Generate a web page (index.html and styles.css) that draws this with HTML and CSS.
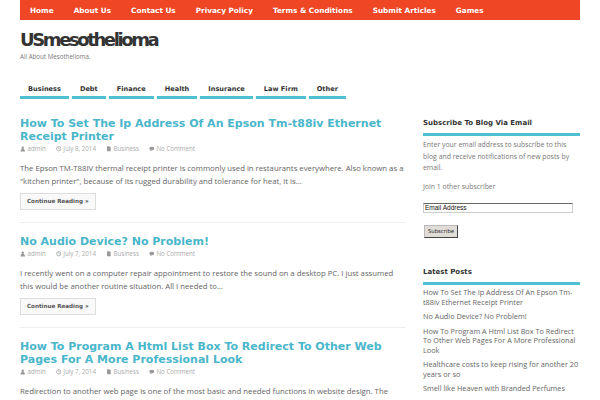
FILE: index.html
```html
<!DOCTYPE html>
<html>
<head>
<meta charset="utf-8">
<link rel="stylesheet" href="styles.css">
</head>
<body>
<div class="page">
  <div class="topbar">
    <ul class="menu">
      <li>Home</li><li>About Us</li><li>Contact Us</li><li>Privacy Policy</li><li>Terms &amp; Conditions</li><li>Submit Articles</li><li>Games</li>
    </ul>
  </div>
  <header class="brand">
    <h1 class="site-title">USmesothelioma</h1>
    <p class="tagline">All About Mesothelioma.</p>
  </header>
  <nav class="cats">
    <span class="cat">Business</span><span class="cat">Debt</span><span class="cat">Finance</span><span class="cat">Health</span><span class="cat">Insurance</span><span class="cat">Law Firm</span><span class="cat">Other</span>
  </nav>
  <div class="wrap">
    <main class="posts">
      <article class="post">
        <h2 class="post-title">How To Set The Ip Address Of An Epson Tm-t88iv Ethernet Receipt Printer</h2>
        <div class="meta">
          <span class="mi"><svg viewBox="0 0 8 8"><circle cx="4" cy="2.4" r="1.8"/><path d="M0.8 8 C0.8 5 2 4.5 4 4.5 C6 4.5 7.2 5 7.2 8 Z"/></svg>admin</span>
          <span class="mi"><svg viewBox="0 0 8 8"><circle class="ring" cx="4" cy="4" r="3.2"/><path class="hand" d="M4 2 V4.2 H5.8"/></svg>July 8, 2014</span>
          <span class="mi"><svg viewBox="0 0 8 8"><path d="M1.5 0.5 H5 L6.8 2.3 V7.5 H1.5 Z"/></svg>Business</span>
          <span class="mi"><svg viewBox="0 0 8 8"><path d="M4 1.2 C6.2 1.2 7.6 2.4 7.6 3.8 C7.6 5.2 6.2 6.3 4 6.3 L1.6 7.6 L2.2 5.8 C1 5.3 0.4 4.6 0.4 3.8 C0.4 2.4 1.8 1.2 4 1.2 Z"/></svg>No Comment</span>
        </div>
        <p class="excerpt">The Epson TM-T88IV thermal receipt printer is commonly used in restaurants everywhere. Also known as a "kitchen printer", because of its rugged durability and tolerance for heat, it is…</p>
        <span class="more">Continue Reading »</span>
      </article>
      <article class="post">
        <h2 class="post-title">No Audio Device? No Problem!</h2>
        <div class="meta">
          <span class="mi"><svg viewBox="0 0 8 8"><circle cx="4" cy="2.4" r="1.8"/><path d="M0.8 8 C0.8 5 2 4.5 4 4.5 C6 4.5 7.2 5 7.2 8 Z"/></svg>admin</span>
          <span class="mi"><svg viewBox="0 0 8 8"><circle class="ring" cx="4" cy="4" r="3.2"/><path class="hand" d="M4 2 V4.2 H5.8"/></svg>July 7, 2014</span>
          <span class="mi"><svg viewBox="0 0 8 8"><path d="M1.5 0.5 H5 L6.8 2.3 V7.5 H1.5 Z"/></svg>Business</span>
          <span class="mi"><svg viewBox="0 0 8 8"><path d="M4 1.2 C6.2 1.2 7.6 2.4 7.6 3.8 C7.6 5.2 6.2 6.3 4 6.3 L1.6 7.6 L2.2 5.8 C1 5.3 0.4 4.6 0.4 3.8 C0.4 2.4 1.8 1.2 4 1.2 Z"/></svg>No Comment</span>
        </div>
        <p class="excerpt">I recently went on a computer repair appointment to restore the sound on a desktop PC. I just assumed this would be another routine situation. All I needed to…</p>
        <span class="more">Continue Reading »</span>
      </article>
      <article class="post">
        <h2 class="post-title">How To Program A Html List Box To Redirect To Other Web Pages For A More Professional Look</h2>
        <div class="meta">
          <span class="mi"><svg viewBox="0 0 8 8"><circle cx="4" cy="2.4" r="1.8"/><path d="M0.8 8 C0.8 5 2 4.5 4 4.5 C6 4.5 7.2 5 7.2 8 Z"/></svg>admin</span>
          <span class="mi"><svg viewBox="0 0 8 8"><circle class="ring" cx="4" cy="4" r="3.2"/><path class="hand" d="M4 2 V4.2 H5.8"/></svg>July 7, 2014</span>
          <span class="mi"><svg viewBox="0 0 8 8"><path d="M1.5 0.5 H5 L6.8 2.3 V7.5 H1.5 Z"/></svg>Business</span>
          <span class="mi"><svg viewBox="0 0 8 8"><path d="M4 1.2 C6.2 1.2 7.6 2.4 7.6 3.8 C7.6 5.2 6.2 6.3 4 6.3 L1.6 7.6 L2.2 5.8 C1 5.3 0.4 4.6 0.4 3.8 C0.4 2.4 1.8 1.2 4 1.2 Z"/></svg>No Comment</span>
        </div>
        <p class="excerpt">Redirection to another web page is one of the most basic and needed functions in website design. The purpose is to send visitors to another page, usually something like this one…</p>
        <span class="more">Continue Reading »</span>
      </article>
    </main>
    <aside class="sidebar">
      <section class="widget">
        <h3 class="widget-title">Subscribe To Blog Via Email</h3>
        <p class="wtext">Enter your email address to subscribe to this blog and receive notifications of new posts by email.</p>
        <p class="wtext join">Join 1 other subscriber</p>
        <div class="email">Email Address</div>
        <span class="subbtn">Subscribe</span>
      </section>
      <section class="widget latest">
        <h3 class="widget-title">Latest Posts</h3>
        <ul class="plist">
          <li>How To Set The Ip Address Of An Epson Tm-t88iv Ethernet Receipt Printer</li>
          <li>No Audio Device? No Problem!</li>
          <li>How To Program A Html List Box To Redirect To Other Web Pages For A More Professional Look</li>
          <li>Healthcare costs to keep rising for another 20 years or so</li>
          <li>Smell like Heaven with Branded Perfumes</li>
        </ul>
      </section>
    </aside>
  </div>
</div>
</body>
</html>
```

FILE: styles.css
```css
html, body {
  margin: 0;
  padding: 0;
  background: #fff;
}
body {
  font-family: "Open Sans", "DejaVu Sans", sans-serif;
  color: #666;
  overflow: hidden;
  height: 400px;
}
.page {
  width: 560px;
  margin: 0 auto;
}
.topbar {
  position: relative;
  height: 20px;
  background: #ef4626;
}
.topbar::before,
.topbar::after {
  content: "";
  position: absolute;
  bottom: 4px;
  width: 40%;
  height: 6px;
  box-shadow: 0 4px 4px rgba(0, 0, 0, 0.6);
  z-index: -1;
}
.topbar::before {
  left: 6px;
  transform: rotate(-1.2deg);
}
.topbar::after {
  right: 6px;
  transform: rotate(1.2deg);
}
.menu {
  list-style: none;
  margin: 0;
  padding: 0 0 0 10px;
  display: flex;
  gap: 20px;
  height: 20px;
  align-items: center;
}
.menu li {
  font-family: "DejaVu Sans", sans-serif;
  font-weight: bold;
  font-size: 7.3px;
  color: #fff;
}
.brand {
  padding-top: 9px;
}
.site-title {
  margin: 0;
  font-family: "DejaVu Sans", sans-serif;
  font-weight: bold;
  font-size: 18px;
  letter-spacing: -2.4px;
  line-height: 22px;
  color: #333;
}
.tagline {
  margin: 2px 0 0;
  font-size: 6.2px;
  line-height: 8px;
  color: #777;
}
.cats {
  display: flex;
  gap: 3px;
  margin-top: 21px;
}
.cat {
  font-family: "DejaVu Sans", sans-serif;
  font-weight: bold;
  font-size: 6.6px;
  color: #333;
  padding: 0 8px;
  line-height: 14px;
  border-bottom: 3px solid #4ec0cf;
}
.wrap {
  display: flex;
  gap: 17px;
  margin-top: 18px;
}
.posts {
  width: 386px;
  flex: none;
}
.post {
  padding: 0 0 12px;
  border-bottom: 1px solid #eee;
  margin-bottom: 12px;
}
.post-title {
  margin: 0;
  font-family: "DejaVu Sans", sans-serif;
  font-weight: bold;
  font-size: 11px;
  line-height: 13px;
  color: #4ab6ca;
}
.meta {
  display: flex;
  gap: 10px;
  font-size: 6.2px;
  line-height: 10px;
  color: #aaa;
  margin-top: 1px;
}
.mi {
  display: inline-flex;
  align-items: center;
  gap: 2px;
}
.mi svg {
  width: 5.5px;
  height: 5.5px;
  fill: #999;
}
.mi svg .ring {
  fill: none;
  stroke: #999;
  stroke-width: 1;
}
.mi svg .hand {
  fill: none;
  stroke: #999;
  stroke-width: 0.9;
}
.excerpt {
  margin: 8px 0 0;
  font-size: 7.75px;
  line-height: 13px;
  color: #666;
}
.more {
  display: block;
  width: max-content;
  margin-top: 5px;
  padding: 0 6px;
  height: 15px;
  line-height: 15px;
  border: 1px solid #ddd;
  background: #f9f9f9;
  font-family: "DejaVu Sans", sans-serif;
  font-weight: bold;
  font-size: 5.6px;
  color: #555;
}
.sidebar {
  width: 157px;
  flex: none;
}
.widget-title {
  margin: 0;
  padding: 1px 0 5px;
  font-family: "DejaVu Sans", sans-serif;
  font-weight: bold;
  font-size: 7px;
  line-height: 10px;
  color: #333;
  border-bottom: 3px solid #4ec0cf;
}
.wtext {
  margin: 3px 0 0;
  font-size: 6.9px;
  line-height: 11.5px;
  color: #777;
}
.join {
  margin-top: 7.5px;
}
.email {
  margin-top: 10px;
  width: 146px;
  height: 8px;
  border: 1px solid #ccc;
  border-top-color: #666;
  font-family: "Liberation Sans", sans-serif;
  font-size: 6.5px;
  line-height: 8px;
  color: #111;
  padding: 0 1px;
}
.subbtn {
  display: block;
  width: max-content;
  margin: 12px 0 0 1px;
  padding: 0 3px;
  height: 11px;
  line-height: 11px;
  background: #e0ddd8;
  border: 1px solid #bbb;
  border-right-color: #444;
  border-bottom-color: #444;
  font-family: "DejaVu Sans", sans-serif;
  font-size: 5.3px;
  color: #222;
}
.latest {
  margin-top: 28.5px;
}
.plist {
  list-style: none;
  margin: 3px 0 0;
  padding: 0;
}
.plist li {
  font-size: 7.3px;
  line-height: 9.5px;
  color: #666;
  margin-bottom: 5px;
}
```
